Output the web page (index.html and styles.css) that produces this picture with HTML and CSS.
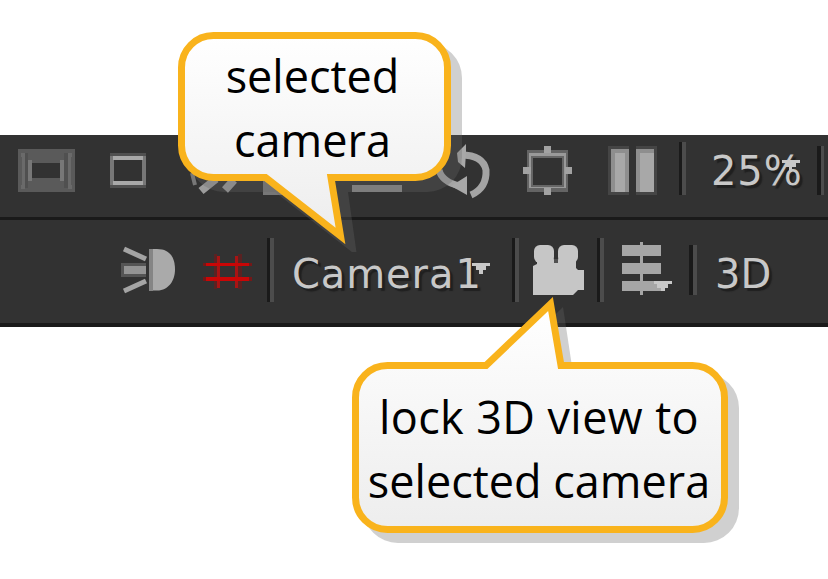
FILE: index.html
```html
<!DOCTYPE html>
<html lang="en">
<head>
<meta charset="utf-8">
<title>Camera view toolbar</title>
<link rel="stylesheet" href="styles.css">
</head>
<body>
<main class="figure">
  <div class="toolbar">
    <div class="row row-top">
      <svg width="90" height="82" viewBox="0 135 90 82" shape-rendering="crispEdges">
        <path fill="#5a5a5a" d="M18 149h57v43H18z"/>
        <path fill="#505050" d="M25 153h43v35H25z"/>
        <path fill="#5a5a5a" d="M28 153h36v35H28z"/>
        <path fill="#6a6a6a" d="M21 153h4v4h-4zM68 153h4v4h-4zM21 185h4v4h-4zM68 185h4v4h-4zM22 157h3v28h-3zM68 157h3v28h-3z"/>
        <path fill="#777" d="M28 160h4v21h-4zM60 160h4v21h-4z"/>
        <path fill="#323232" d="M32 163h28v15H32z"/>
      </svg>
      <svg width="80" height="82" viewBox="90 135 80 82" shape-rendering="crispEdges">
        <path fill="#505050" d="M110 153h36v35h-36z"/>
        <path fill="#777" d="M110 156h36v29h-36z"/>
        <path fill="#a8a8a8" d="M113 156h30v4h-30zM113 181h30v4h-30z"/>
        <path fill="#323232" d="M114 160h28v21h-28z"/>
      </svg>
      <svg width="80" height="82" viewBox="170 135 80 82">
        <path stroke="#777" stroke-width="4" d="M192 173l3 12"/>
        <path stroke="#9c9c9c" stroke-width="8" d="M201 191l15-12M225 190l9-10"/>
      </svg>
      <svg width="95" height="82" viewBox="250 135 95 82" shape-rendering="crispEdges">
        <path fill="#777" d="M263 181h25v14h-25z"/>
      </svg>
      <svg width="75" height="82" viewBox="345 135 75 82" shape-rendering="crispEdges">
        <path fill="#888" d="M352 185h50v7h-50z"/>
      </svg>
      <svg width="85" height="82" viewBox="420 135 85 82">
        <path fill="none" stroke="#a4a4a4" stroke-width="7" d="M461 155q22 0 25 15q1 18-15 25M439 170q3 12 21 16"/>
        <path fill="#a8a8a8" d="M457 153l9-9v9l-1 15-7-6zM467 176v19l-16-9z"/>
      </svg>
      <svg width="85" height="82" viewBox="505 135 85 82" shape-rendering="crispEdges">
        <path fill="#646464" d="M527 150h41v42h-41z"/>
        <path fill="#999" d="M529 153h37v35h-37z"/>
        <path fill="#666" d="M531 156h33v31h-33z"/>
        <path fill="#323232" d="M533 158h29v27h-29z"/>
        <path fill="#a2a2a2" d="M544 146h7v7h-7zM544 188h7v7h-7zM523 167h8v7h-8zM565 167h7v7h-7z"/>
      </svg>
      <svg width="80" height="82" viewBox="590 135 80 82" shape-rendering="crispEdges">
        <path fill="#454545" d="M608 146h21v49h-21zM636 146h21v49h-21z"/>
        <path fill="#8e8e8e" d="M611 149h18v43h-18zM636 149h18v43h-18z"/>
        <path fill="#a8a8a8" d="M615 153h10v39h-10zM640 153h14v39h-14z"/>
      </svg>
      <svg width="30" height="82" viewBox="670 135 30 82" shape-rendering="crispEdges">
        <path fill="#1a1a1a" d="M679 142h3v53h-3z"/><path fill="#4c4c4c" d="M682 142h4v53h-4z"/>
      </svg>
      <div class="label label-zoom"><span>25%</span>
        <svg class="arrow arrow-zoom" width="18" height="11" viewBox="0 0 18 11" shape-rendering="crispEdges"><path fill="#c8c8c8" d="M0 0h18v3h-4v4H4V3H0zM7 7h3v4H7z"/></svg>
      </div>
      <svg width="18" height="82" viewBox="810 135 18 82" shape-rendering="crispEdges">
        <path fill="#1a1a1a" d="M817 146h4v49h-4z"/><path fill="#4c4c4c" d="M821 146h3v49h-3z"/>
      </svg>
    </div>
    <div class="row row-bottom">
      <svg width="80" height="103" viewBox="110 220 80 103">
        <path fill="#555" d="M121 263h25v14h-25z"/>
        <path fill="#949494" d="M124 266h22v8h-22z"/>
        <path stroke="#a4a4a4" stroke-width="5" d="M124 249l22 10M124 291l22-10"/>
        <path fill="#aaa" d="M150 249h7c14 0 18 10 18 20.500s-6 21-18 21h-7z"/>
        <path fill="#858585" d="M149 249h4v42h-4z"/>
      </svg>
      <svg width="70" height="103" viewBox="190 220 70 103" shape-rendering="crispEdges">
        <path fill="#5a2222" d="M214 254h3v35h-3zM238 254h4v35h-4z"/>
        <path fill="#a81414" d="M217 256h3v32h-3zM235 256h3v32h-3z"/>
        <path fill="#741818" d="M203 263h49v3h-49zM203 277h49v4h-49z"/>
        <path fill="#c90606" d="M206 263h43v3h-43zM206 277h43v4h-43z"/>
      </svg>
      <svg width="25" height="103" viewBox="260 220 25 103" shape-rendering="crispEdges">
        <path fill="#1a1a1a" d="M267 238h3v64h-3z"/><path fill="#4c4c4c" d="M270 238h4v64h-4z"/>
      </svg>
      <div class="label label-camera"><span>Camera<span class="one">1</span></span>
        <svg class="arrow arrow-camera" width="18" height="11" viewBox="0 0 18 11" shape-rendering="crispEdges"><path fill="#c8c8c8" d="M0 0h18v3h-4v4h-3v4H7V7H4V3H0z"/></svg>
      </div>
      <svg width="20" height="103" viewBox="505 220 20 103" shape-rendering="crispEdges">
        <path fill="#1a1a1a" d="M512 238h3v64h-3z"/><path fill="#4c4c4c" d="M515 238h4v64h-4z"/>
      </svg>
      <svg width="65" height="103" viewBox="525 220 65 103">
        <g fill="#c6c6c6">
          <rect x="534" y="245" width="20" height="18" rx="6"/>
          <rect x="558" y="245" width="20" height="18" rx="6"/>
          <path d="M537 258h16l3 5 3-5h17v10l2 2h6v20h-6l-5 5h-40v-29l4-2z"/>
        </g>
        <path fill="#505050" d="M554 259h4v4h-4z"/>
      </svg>
      <svg width="20" height="103" viewBox="590 220 20 103" shape-rendering="crispEdges">
        <path fill="#1a1a1a" d="M597 238h3v64h-3z"/><path fill="#4c4c4c" d="M600 238h4v64h-4z"/>
      </svg>
      <svg width="70" height="103" viewBox="610 220 70 103" shape-rendering="crispEdges">
        <path fill="#a6a6a6" d="M622 245h39v11h-39zM622 263h39v11h-39zM622 281h39v10h-39zM640 242h3v53h-3z"/>
        <path fill="#c8c8c8" d="M654 281h18v3h-4v4h-3v3h-4v-3h-4v-4h-3z"/>
      </svg>
      <svg width="20" height="103" viewBox="680 220 20 103" shape-rendering="crispEdges">
        <path fill="#1a1a1a" d="M689 245h4v50h-4z"/><path fill="#4c4c4c" d="M693 245h4v50h-4z"/>
      </svg>
      <div class="label label-mode"><span>3D</span></div>
    </div>
  </div>

  <div class="callout callout-selected">
    <svg class="bubble" width="290" height="220" viewBox="178 32 290 220">
      <defs><linearGradient id="fillA" x1="0" y1="0" x2="0" y2="1"><stop offset="0" stop-color="#fff"/><stop offset="1" stop-color="#ededed"/></linearGradient></defs>
      <path class="shade" transform="translate(11 11)" d="M213 32h203a35 35 0 0 1 35 35v79a35 35 0 0 1-35 35h-79l9 64-82-64h-51a35 35 0 0 1-35-35v-79a35 35 0 0 1 35-35z"/>
      <path class="outline" fill="url(#fillA)" d="M213.500 35.500h202a32 32 0 0 1 32 32v78a32 32 0 0 1-32 32h-84.500l9.500 58.500-75-58.500h-52a32 32 0 0 1-32-32v-78a32 32 0 0 1 32-32z"/>
    </svg>
    <p class="caption">selected<br>camera</p>
  </div>

  <div class="callout callout-lock">
    <svg class="bubble" width="390" height="252" viewBox="352 294 390 252">
      <defs><linearGradient id="fillB" x1="0" y1="0" x2="0" y2="1"><stop offset="0" stop-color="#fff"/><stop offset="1" stop-color="#ededed"/></linearGradient></defs>
      <path class="shade" transform="translate(11 11)" d="M387 362h98l67-66 10 66h131a35 35 0 0 1 35 35v100a35 35 0 0 1-35 35H387a35 35 0 0 1-35-35V397a35 35 0 0 1 35-35z"/>
      <path class="outline" fill="url(#fillB)" d="M387.500 365.500H486l64.500-61.500 10.500 61.500h131.500a32 32 0 0 1 32 32v100a32 32 0 0 1-32 32h-305a32 32 0 0 1-32-32v-100a32 32 0 0 1 32-32z"/>
    </svg>
    <p class="caption"><span class="wide">lock 3D view to</span><br>selected camera</p>
  </div>
</main>
</body>
</html>
```
FILE: styles.css
```css
body {
  margin: 0;
  background: #fff;
}

.figure {
  position: relative;
  box-sizing: border-box;
  width: 828px;
  height: 579px;
  padding-top: 135px;
  overflow: hidden;
}

.toolbar {
  background: #323232;
  border-bottom: 4px solid #1a1a1a;
}

.row {
  display: flex;
}

.row > * {
  flex: none;
}

.row-top {
  height: 82px;
  border-bottom: 3px solid #1a1a1a;
}

.row-bottom {
  height: 103px;
  padding-left: 110px;
}

.label {
  position: relative;
  box-sizing: border-box;
  font: 40px/48px "DejaVu Sans", sans-serif;
  color: #c8c8c8;
  text-shadow: 3px 3px 1px #202020;
  white-space: nowrap;
}

.label-zoom {
  width: 110px;
  padding: 12px 0 0 11px;
  letter-spacing: 0.9px;
}

.label-camera {
  width: 220px;
  padding: 30px 0 0 7px;
  letter-spacing: 0.9px;
}

.one {
  margin-left: 1px;
}

.label-mode {
  padding: 30px 0 0 15px;
}

.arrow {
  position: absolute;
}

.arrow-zoom {
  left: 82px;
  top: 25px;
}

.arrow-camera {
  left: 187px;
  top: 43px;
}

.callout {
  position: absolute;
}

.callout-selected {
  left: 178px;
  top: 32px;
  width: 273px;
}

.callout-lock {
  left: 352px;
  top: 294px;
  width: 376px;
}

.bubble {
  display: block;
  position: absolute;
  left: 0;
  top: 0;
}

.shade {
  fill: rgba(102, 102, 102, 0.31);
}

.outline {
  stroke: #f9b31c;
  stroke-width: 7;
}

.caption {
  position: relative;
  left: -2px;
  margin: 0;
  padding-top: 12px;
  font: 45px/64px "Open Sans", sans-serif;
  color: #000;
  text-align: center;
  white-space: nowrap;
}

.callout-lock .caption {
  left: -1px;
  padding-top: 91px;
}

.wide {
  letter-spacing: 0.4px;
}
```
